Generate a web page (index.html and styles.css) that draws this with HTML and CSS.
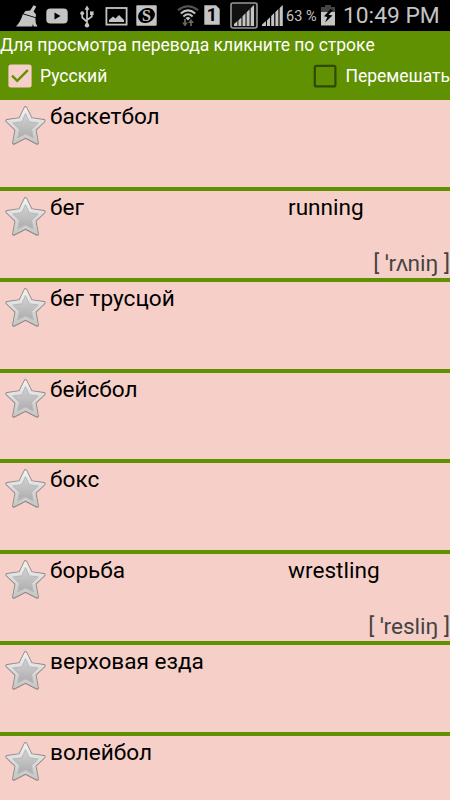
FILE: index.html
```
<!DOCTYPE html>
<html lang="ru">
<head>
  <meta charset="UTF-8">
  <meta name="viewport" content="width=device-width, initial-scale=1">
  <title>Словарь</title>
  <link rel="stylesheet" href="styles.css">
</head>
<body>
  <!-- shared star -->
  <svg class="defs" width="0" height="0">
    <defs>
      <linearGradient id="star-rim" x1="0" y1="0" x2="0" y2="1">
        <stop offset="0" stop-color="#f2f2f2"/>
        <stop offset="1" stop-color="#c6c6c6"/>
      </linearGradient>
      <linearGradient id="star-fill" x1="0" y1="0" x2="0" y2="1">
        <stop offset="0" stop-color="#d2d2d2"/>
        <stop offset="1" stop-color="#adadad"/>
      </linearGradient>
      <symbol id="star" viewBox="0 0 42 42">
        <path d="M20.5 3 L26 14 L38.8 15.8 L29.6 24.7 L32.1 38 L20.5 32 L8.9 38 L11.4 24.7 L2.2 15.8 L15 14Z" fill="#8e8583" stroke="#8e8583" stroke-width="3.6" stroke-linejoin="round"/>
        <path d="M20.5 3 L26 14 L38.8 15.8 L29.6 24.7 L32.1 37.6 L20.5 31.7 L8.9 37.6 L11.4 24.7 L2.2 15.8 L15 14Z" fill="url(#star-rim)" stroke="url(#star-rim)" stroke-width="1.8" stroke-linejoin="round"/>
        <path d="M20.5 8.6 L24.2 16.8 L33.2 18 L26.6 24.4 L28.3 33 L20.5 29 L12.7 33 L14.4 24.4 L7.8 18 L16.8 16.8Z" fill="url(#star-fill)" stroke="#b9b9b9" stroke-width="1" stroke-linejoin="round"/>
      </symbol>
    </defs>
  </svg>

  <div class="status-bar">
    <svg class="ico broom" width="22" height="22" viewBox="0 0 22 22">
      <path d="M17.5 0.3 L20.3 1.5 L17.6 6.5 L20 9.4 L19.7 12.2 L7.5 8.5 L9.5 6 L14.2 5.6Z"/>
      <path d="M6.8 9.2 L19.4 13 Q19 18 21.5 21.5 L17.8 21.5 L16.8 19 L16.4 21.5 L0 21.5 Q4.5 17 6.8 9.2Z"/>
    </svg>
    <svg class="ico youtube" width="22" height="16" viewBox="0 0 22 16">
      <rect x="0.3" y="0.5" width="21.4" height="15" rx="4"/>
      <path d="M8.5 4.5 L14.5 8 L8.5 11.5Z" fill="#000"/>
    </svg>
    <svg class="ico usb" width="14" height="24" viewBox="0 0 14 24">
      <path d="M7 3V21 M2.2 8V12.5L7 16.8 M11.8 8V11.5L7 15.2" fill="none" stroke="#c4c4c4" stroke-width="1.7"/>
      <path d="M7 0.5L9.5 4.7H4.5Z"/>
      <circle cx="7" cy="20.3" r="2.2"/>
      <circle cx="2.2" cy="8.2" r="1.9"/>
      <rect x="10" y="6.4" width="3.6" height="3.6"/>
    </svg>
    <svg class="ico picture" width="23" height="19" viewBox="0 0 23 19">
      <rect x="1.4" y="1" width="20.2" height="16.6" fill="none" stroke="#c4c4c4" stroke-width="1.8"/>
      <path d="M4 15V13L8 9.5L10.5 11.5L14 8L19 13V15Z"/>
    </svg>
    <svg class="ico coin" width="21" height="21" viewBox="0 0 21 21">
      <rect x="0.3" y="0.3" width="20.4" height="20.4" rx="1"/>
      <ellipse cx="10.5" cy="10.5" rx="8.6" ry="7.3" transform="rotate(-25 10.5 10.5)" fill="#000"/>
      <text x="10.5" y="15.8" text-anchor="middle" class="coin-letter">S</text>
    </svg>
    <svg class="ico wifi" width="22" height="22" viewBox="0 0 22 22">
      <g fill="none" stroke="#c4c4c4" stroke-width="2">
        <path d="M1 5.2Q11 -2.7 21 5.2" stroke="#555"/>
        <path d="M3.8 8.4Q11 2.3 18.2 8.4"/>
        <path d="M6.4 11.4Q11 7.2 15.6 11.4"/>
      </g>
      <path d="M8.5 13Q11 11 13.5 13L11 15.5Z"/>
      <path d="M8 14V19 M14 21V16" stroke="#666" stroke-width="1.8"/>
      <path d="M5 17.5H11L8 21.5Z M11 18H17L14 14Z" fill="#666"/>
    </svg>
    <svg class="ico sim" width="16" height="20" viewBox="0 0 16 20">
      <path d="M0.3 0.3H12L15.7 4V19.7H0.3Z"/>
      <text x="7.8" y="16.2" text-anchor="middle" class="sim-number">1</text>
    </svg>
    <svg class="ico signal-box" width="28" height="27" viewBox="0 0 28 27">
      <rect x="1" y="1" width="26" height="25" rx="2" fill="#111" stroke="#999" stroke-width="1.6"/>
      <path d="M4 24V22L7.4 19V24Z M8.4 24V18.5L11.4 15.5V24Z M12.5 24V14.3L15.5 11.3V24Z M16.6 24V10.2L19.6 7.2V24Z M20.7 24V6.2L24 3V24Z"/>
    </svg>
    <svg class="ico signal" width="21" height="21" viewBox="0 0 21 21">
      <path d="M0 21V19.5L4 16V21Z M5 21V15.2L8 12.2V21Z M9.2 21V11L12.2 8V21Z M13.4 21V7L16.4 4V21Z M17.6 21V3L20.8 0V21Z"/>
    </svg>
    <span class="battery-text">63 %</span>
    <svg class="ico battery" width="14" height="21" viewBox="0 0 14 21">
      <path d="M4 0H10V2H14V8H0V2H4Z" fill="#444"/>
      <rect y="7" width="14" height="13.5"/>
      <path d="M9.5 4.2L3 11.2L6.4 12L4 17.5L11.5 10.6L7.5 9.8L12 5Z" fill="#000"/>
    </svg>
    <span class="clock">10:49 PM</span>
  </div>

  <div class="header">
    <div class="hint">Для просмотра перевода кликните по строке</div>
    <div class="options">
      <div class="option">
        <svg class="check" width="24" height="24" viewBox="0 0 24 24">
          <rect x="0.4" y="0.4" width="23.2" height="23.2" rx="2.5" fill="#f6d0c8"/>
          <path d="M4 11.6L9.2 16.8L19.8 6.2" fill="none" stroke="#5f9103" stroke-width="2.4"/>
        </svg>
        <span>Русский</span>
      </div>
      <div class="option">
        <svg class="check" width="24" height="24" viewBox="0 0 24 24">
          <rect x="1.8" y="1.8" width="20.6" height="20.6" rx="1.5" fill="none" stroke="#304a03" stroke-width="2.2"/>
        </svg>
        <span>Перемешать</span>
      </div>
    </div>
  </div>

  <div class="list">
    <div class="row">
      <svg class="star"><use href="#star"/></svg>
      <div class="word">баскетбол</div>
    </div>
    <div class="row">
      <svg class="star"><use href="#star"/></svg>
      <div class="word">бег</div>
      <div class="answer">
        <div class="translation">running</div>
        <div class="transcription">[ ˈrʌniŋ ]</div>
      </div>
    </div>
    <div class="row">
      <svg class="star"><use href="#star"/></svg>
      <div class="word">бег трусцой</div>
    </div>
    <div class="row">
      <svg class="star"><use href="#star"/></svg>
      <div class="word">бейсбол</div>
    </div>
    <div class="row">
      <svg class="star"><use href="#star"/></svg>
      <div class="word">бокс</div>
    </div>
    <div class="row">
      <svg class="star"><use href="#star"/></svg>
      <div class="word">борьба</div>
      <div class="answer">
        <div class="translation">wrestling</div>
        <div class="transcription">[ ˈresliŋ ]</div>
      </div>
    </div>
    <div class="row">
      <svg class="star"><use href="#star"/></svg>
      <div class="word">верховая езда</div>
    </div>
    <div class="row">
      <svg class="star"><use href="#star"/></svg>
      <div class="word">волейбол</div>
    </div>
  </div>
</body>
</html>
```

FILE: styles.css
```
* {
  box-sizing: border-box;
}

body {
  margin: 0;
  height: 800px;
  overflow: hidden;
  display: flex;
  flex-direction: column;
  background: #f6d0c8;
  font-family: Roboto, "Noto Sans", sans-serif;
}

.defs {
  flex: none;
}

/* status bar */
.status-bar {
  flex: none;
  height: 31px;
  background: #000;
  color: #c4c4c4;
  display: flex;
  align-items: flex-start;
  padding: 5px 0 0 16px;
  white-space: nowrap;
}

.ico {
  flex: none;
  fill: #c4c4c4;
}

.youtube {
  margin: 3px 0 0 8px;
}

.usb {
  margin-left: 12px;
}

.picture {
  margin: 2px 0 0 11px;
}

.coin {
  margin-left: 8px;
}

.coin-letter {
  font: bold 16px "Liberation Serif", serif;
}

.wifi {
  margin-left: 20px;
}

.sim {
  margin-left: 5px;
}

.sim-number {
  font: bold 18px Roboto, sans-serif;
  fill: #000;
}

.signal-box {
  margin: -3px 0 0 10px;
}

.signal {
  margin-left: 4px;
}

.battery-text {
  flex: none;
  width: 35px;
  margin-left: 3px;
  font-size: 14.5px;
  line-height: 23px;
}

.clock {
  margin-left: 8px;
  font-size: 22.8px;
  line-height: 22px;
}

/* header */
.header {
  flex: none;
  height: 69px;
  background: #5f9103;
  color: #fff;
  font-size: 17.5px;
  white-space: nowrap;
}

.hint {
  height: 33px;
  line-height: 28px;
}

.options {
  display: flex;
  justify-content: space-between;
  padding-left: 8px;
}

.option {
  display: flex;
  align-items: center;
  line-height: 24px;
}

.check {
  margin-right: 8px;
}

/* word list */
.row {
  display: flex;
  height: 90.85px;
  border-bottom: 4px solid #5f9103;
  font-size: 22.6px;
  line-height: 28px;
  color: #000;
  padding-top: 3px;
}

.star {
  flex: none;
  width: 42px;
  height: 42px;
  margin: 2px 3px 0 5px;
}

.word {
  width: 238px;
}

.answer {
  flex: 1;
  display: flex;
  flex-direction: column;
  justify-content: space-between;
}

.transcription {
  text-align: right;
  color: #444;
}
```
